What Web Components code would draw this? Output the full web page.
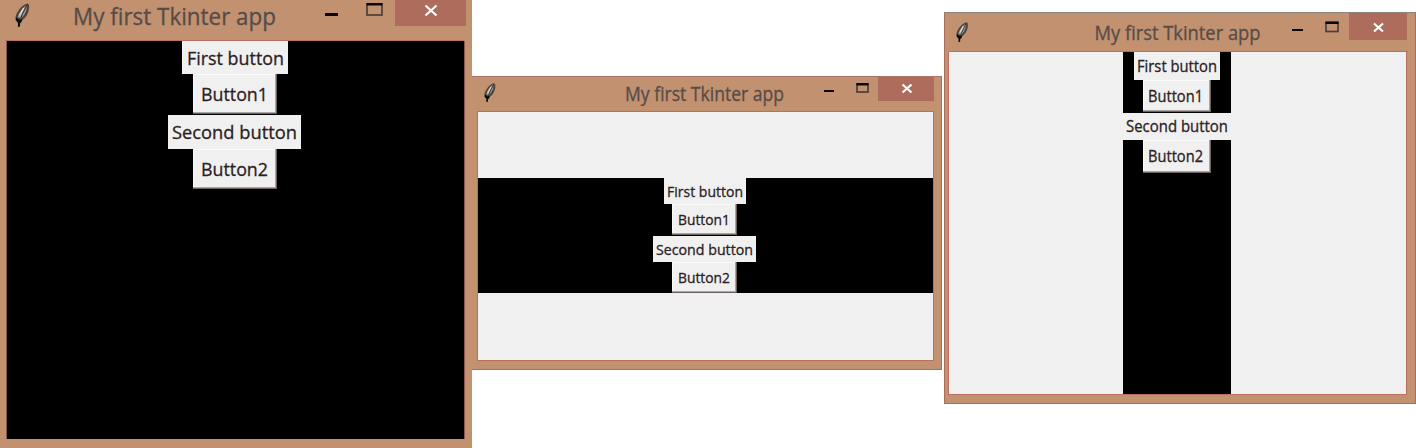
<!DOCTYPE html>
<html lang="en">
<head>
<meta charset="utf-8">
<title>My first Tkinter app</title>
<style>
html,body{margin:0;background:#fff;overflow:hidden}
body{width:1416px;height:448px;display:flex;align-items:flex-start}
</style>
</head>
<body>
<tk-window style="--w:472px;--h:448px;--bar:41px;--pad:0 7px 9px 6px;--edge:0 0 0 0;--line:#8c554b;--canvas:#000">
  <tk-titlebar slot="bar" kind="large"></tk-titlebar>
  <tk-frame style="--fh:398px;--shift:2px">
    <tk-label text="First button" w="106" h="33" x="5" y="24" len="97" size="19"></tk-label>
    <tk-button text="Button1" w="84" h="40" x="8" y="26.5" len="67" size="19"></tk-button>
    <tk-label text="Second button" w="133" h="34" x="4" y="24" len="125" size="19" style="margin-top:1px"></tk-label>
    <tk-button text="Button2" w="84" h="40" x="8" y="27" len="67" size="19"></tk-button>
  </tk-frame>
</tk-window>
<tk-window style="--w:470px;--h:294px;--bar:36px;--pad:0 8px 9px 5px;--edge:1px 1px 1px 0;margin-top:76px">
  <tk-titlebar slot="bar" kind="medium"></tk-titlebar>
  <tk-frame style="--fh:115px;--shift:2px;margin-top:66px">
    <tk-label text="First button" w="82" h="26" x="3" y="18.500" len="76" size="15"></tk-label>
    <tk-button text="Button1" w="65" h="31" x="6" y="20.500" len="52" size="15"></tk-button>
    <tk-label text="Second button" w="103" h="26" x="3" y="18.500" len="97" size="15" style="margin-top:1px"></tk-label>
    <tk-button text="Button2" w="65" h="31" x="6" y="20.500" len="52" size="15"></tk-button>
  </tk-frame>
</tk-window>
<tk-window style="--w:472px;--h:392px;--bar:40px;--pad:0 9px 9px 4px;--edge:1px 1px 1px 1px;--top:#8b8580;margin:12px 0 0 2px">
  <tk-titlebar slot="bar" kind="right"></tk-titlebar>
  <tk-frame style="--fh:342px;width:108px;margin-left:174px">
    <tk-label text="First button" w="86" h="28" x="3" y="19.5" len="80" size="15.5"></tk-label>
    <tk-button text="Button1" w="68" h="32" x="5" y="21.5" len="55" size="15.5"></tk-button>
    <tk-label text="Second button" w="108" h="27" x="3" y="19" len="102" size="15.5" style="margin-top:1px"></tk-label>
    <tk-button text="Button2" w="68" h="33" x="5" y="22" len="55" size="15.5"></tk-button>
  </tk-frame>
</tk-window>
<script>
class TkWindow extends HTMLElement {
  constructor() {
    super();
    this.attachShadow({mode: 'open'}).innerHTML = `
      <style>
        :host{display:flex;flex-direction:column;flex:none;box-sizing:border-box;width:var(--w);height:var(--h);
          background:#c2916f;position:relative}
        .bar{height:var(--bar);flex:none}
        .body{flex:1;min-height:0;display:flex;padding:var(--pad)}
        .client{flex:1;min-width:0;background:var(--canvas,#f0f0f0);border:1px solid var(--line,#b8705f);border-top:0;display:flow-root;box-sizing:border-box}
        .top{position:absolute;left:0;right:0;top:calc(var(--bar) - 1px);height:1px;margin:0 8px 0 5px;background:#b8705f}
        .edge{position:absolute;inset:0;border:0 solid #ad6d5b;border-width:var(--edge);border-top-color:var(--top,#ad7465);pointer-events:none}
      </style>
      <div class="bar"><slot name="bar"></slot></div>
      <div class="body"><div class="client"><slot></slot></div></div>
      <div class="top"></div><div class="edge"></div>`;
  }
}
customElements.define('tk-window', TkWindow);

const BARS = {
  large:  {w: 472, h: 40, f: [15, 3, 1], t: [73, 25, 203, 23.8], min: [325, 13, 13, 3], max: [366.5, 4, 15, 11], close: [395, 0, 71, 26], cross: [425.5, 5.5, 11, 10]},
  medium: {w: 470, h: 35, f: [12, 7, .8], t: [153, 24.5, 159, 19.4], min: [352, 14, 10, 2], max: [384.5, 8, 11, 8], close: [406, 0, 56, 25], cross: [430.5, 8.5, 9, 8]},
  right:  {w: 472, h: 39, f: [12, 10, .84], t: [150.5, 27.5, 166, 19.8], min: [348, 17, 11, 2], max: [381.5, 10.5, 12, 9], close: [405, 1, 58, 27], cross: [430, 11.5, 9, 8]}
};
class TkTitlebar extends HTMLElement {
  connectedCallback() {
    const b = BARS[this.getAttribute('kind')];
    const [fx, fy, fs] = b.f, [tx, ty, tl, ts] = b.t;
    const rect = (a, extra) => `<rect x="${a[0]}" y="${a[1]}" width="${a[2]}" height="${a[3]}" ${extra}/>`;
    const [cx, cy, cw, ch] = b.cross, m = b.max;
    this.attachShadow({mode: 'open'}).innerHTML = `
      <style>:host{display:block}svg{display:block}text{font-family:"Open Sans","Noto Sans",sans-serif;fill:#554c49;stroke:#554c49;stroke-width:.3px}</style>
      <svg width="${b.w}" height="${b.h}">
        <g transform="translate(${fx} ${fy}) scale(${fs})">
          <path d="M12.800.4C8.200 1 3 6.500.6 13.200L.4 17l3 3.400 3-.8 1-2.600c4.800-3 7.400-9.600 6.600-15.200z" fill="#4d443d"/>
          <path d="M11.800 2C8 4 4 9 2.600 14.600l3.600.4C9.800 12 12.200 7 11.800 2z" fill="#a09b96"/>
          <path d="M12 2C10 6 7.800 10 5.800 15" fill="none" stroke="#2a2522" stroke-width="1"/>
          <path d="M8.600 5L4.600 12.500" fill="none" stroke="#e4e2e0" stroke-width="1.200"/>
          <path d="M1.300 14l3 3 3-1-1 3-1.200.7-.2 3.800-2 .4.200-4.500-2-2z" fill="#080808"/>
        </g>
        <text x="${tx}" y="${ty}" font-size="${ts}" textLength="${tl}" lengthAdjust="spacingAndGlyphs">My first Tkinter app</text>
        ${rect(b.min, 'fill="#080808"')}
        ${rect([m[0] + .5, m[1], m[2], m[3]], 'fill="none" stroke="#4d3e37" stroke-width="1.7"')}
        ${rect([m[0], m[1] - 1, m[2] + 1, 2.5], 'fill="#080808"')}
        ${rect(b.close, 'fill="#ad6c5c"')}
        <path d="M${cx} ${cy}l${cw} ${ch}m0 ${-ch}l${-cw} ${ch}" stroke="#fff" stroke-width="2.100" fill="none"/>
      </svg>`;
  }
}
customElements.define('tk-titlebar', TkTitlebar);

class TkFrame extends HTMLElement {
  constructor() {
    super();
    this.attachShadow({mode: 'open'}).innerHTML =
      `<style>:host{display:flex;flex-direction:column;align-items:center;box-sizing:border-box;height:var(--fh);padding-right:var(--shift,1px);background:#000}</style><slot></slot>`;
  }
}
customElements.define('tk-frame', TkFrame);

class TkLabel extends HTMLElement {
  get relief() { return ''; }
  connectedCallback() {
    const a = n => this.getAttribute(n);
    this.attachShadow({mode: 'open'}).innerHTML = `
      <style>
        :host{display:block;flex:none;box-sizing:border-box;width:${a('w')}px;height:${a('h')}px;background:#f0f0f0;${this.relief}}
        svg{display:block;overflow:visible}
        text{font-family:"Open Sans","Noto Sans",sans-serif;fill:#2b211e;stroke:#2b211e;stroke-width:.3px}
      </style>
      <svg width="${a('w') - 2}" height="${a('h') - 2}"><text x="${a('x')}" y="${a('y')}" font-size="${a('size')}" textLength="${a('len')}" lengthAdjust="spacingAndGlyphs">${a('text')}</text></svg>`;
  }
}
customElements.define('tk-label', TkLabel);

class TkButton extends TkLabel {
  get relief() { return 'box-shadow:inset -1px -1px #6b625e,inset -2px -2px #aaa6a3,inset 1px 1px #fafafa'; }
}
customElements.define('tk-button', TkButton);
</script>
</body>
</html>
